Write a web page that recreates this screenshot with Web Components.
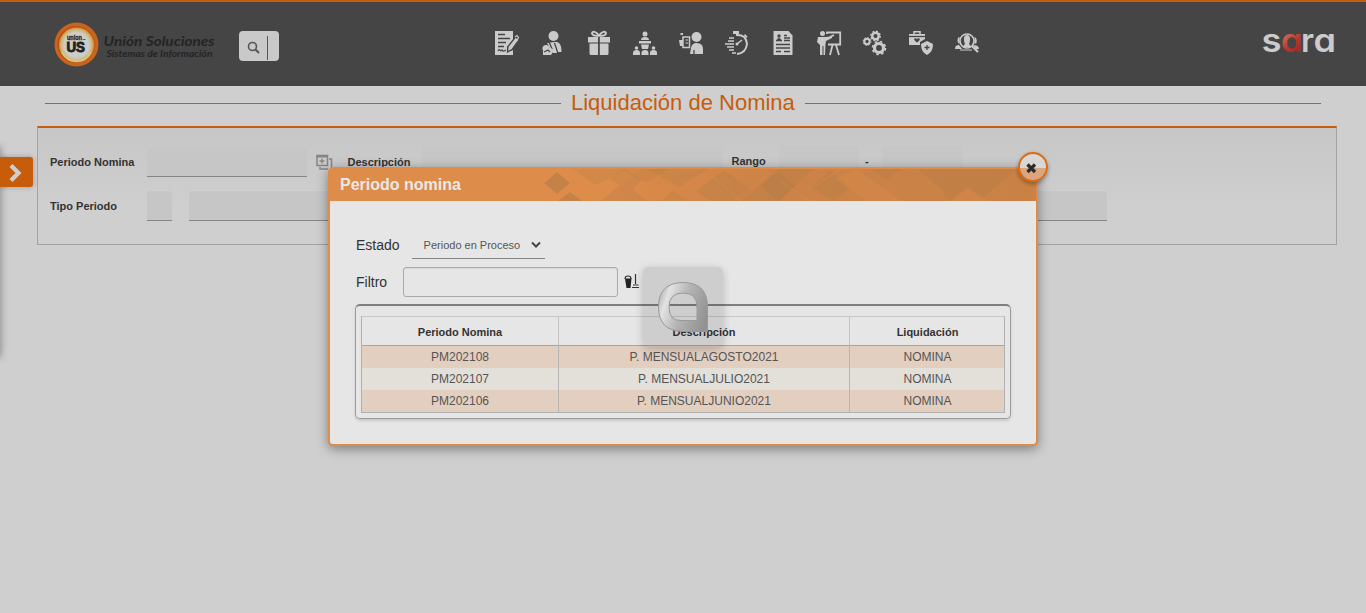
<!DOCTYPE html>
<html lang="es">
<head>
<meta charset="utf-8">
<title>Liquidación de Nomina</title>
<style>
html,body{margin:0;height:100%;overflow:hidden}
body{background:#cfcfcf;font-family:"Liberation Sans",Arial,sans-serif;color:#333}
</style>
</head>
<body>
<payroll-page></payroll-page>
<script>
const define = (name, html, setup) => customElements.define(name, class extends HTMLElement {
  connectedCallback() {
    if (this.shadowRoot) return;
    const root = this.attachShadow({mode: 'open'});
    const t = document.createElement('template');
    t.innerHTML = html;
    root.append(t.content.cloneNode(true));
    if (setup) setup(this, root);
  }
});

/* Module icons on a 24x24 grid; "k" marks details cut out in the bar colour. */
const ICONS = {
  edit: `<path d="M0 0h18v9l-6 7v4h4l2-1v5H0z"/><path class="k" d="M3 3.500h7M3 7.500h12M3 11.500h8M3 15.500h6M3 20c2-4 2 2 4-1 1 2 2 1 4 0"/><path class="k" stroke-width="1" d="m12.500 21 .5-5.500L20.500 6 24 8.500l-7 10z" style="fill:#cbcbcb"/><path class="w" stroke-width="1.200" d="m20 6 2-1.500 1.500 2-2 4"/>`,
  worker: `<circle cx="12.500" cy="5" r="5"/><path d="M8 12q4-1.500 8-1 4.500 1.500 4.500 8.500v1.500H15z"/><path d="M6 12h7l3 10h-4z"/><path class="k" d="m8.500 12 3 7m2-7 3 9"/><circle cx="5" cy="17.500" r="3.500"/><path d="m2 20 6-4 5 3-3 5H2z"/><path class="k" stroke-width="1" d="m3 21 4-2 2 2"/>`,
  gift: `<path d="M1 6h10v5.500H1zm11.800 0H23v5.500H12.800zM2.500 12.500H11V24H4q-1.500 0-1.500-1.500zm10.300 0h8.700v10q0 1.500-1.500 1.500h-7.200z"/><path class="w" stroke-width="1.900" d="M12 4.500C9 0 5 0 5 2.500q1 3 7 2 6 1 7-2C19 0 15 0 12 4.500"/>`,
  team: `<circle cx="12" cy="3" r="2.500"/><path d="M8 9q0-3 4-3t4 3zM6 10h12v2.500H6zm2 3.500h8L15 18H9zM0 22q0-3 3.500-3T7 22v2H0zm8.500 0q0-3 3.500-3t3.500 3v2h-7zm8.500 0q0-3 3.500-3t3.500 3v2h-7z"/><circle cx="3.500" cy="17" r="1.800"/><circle cx="20.500" cy="17" r="1.800"/>`,
  present: `<circle cx="17.500" cy="6" r="5"/><path d="M11 23l1-6q1-5 5.500-5 6.500 0 6.500 6v5z"/><path class="w" stroke-width="1.500" d="M4 6h6.500v10.500H4z"/><path d="M0 9h4v6H1zM1.500 2H4v2H1.500z"/><path class="w" stroke-width="1.200" d="M6.500 9H9M6.500 12H9"/><path class="k" d="M15 19v4"/>`,
  timer: `<path class="w" stroke-width="2" d="M11 4q10-1 11 9-1 9-10 10"/><path class="w" stroke-width="1.500" d="M4 7h5M3 10h6M0 13h9M2 16h7M4 19h5M7 22h4M12 13l5-4"/><path d="M8 0h6v3H8zM20 3l2.500 2.500-1 1.500L19 4.500z"/><circle cx="12" cy="13" r="1.500"/>`,
  resume: `<path d="M2.500 0h15l4 4.500V24h-19z"/><path class="k" d="M5 9.500h6M13 4.500h3M13 7h6M13 9.500h6M5 13.500h14M5 17h14M5 20.500h5M13 20.500h6"/><path d="M6 9q0-2 2-2t2 2z" fill="#454545"/><circle cx="8" cy="5" r="1.700" fill="#454545"/>`,
  teach: `<circle cx="5.500" cy="2.500" r="2.500"/><path d="M1 6h8l6-1v2l-6 3-.5 3-.5 11H6.500V15h-1v9H3V14L0 11z"/><path class="w" stroke-width="1.800" d="M10 3V1.500h13.200v12H11M15.500 14 13 24m6-10 3 10M13 6l4-2"/>`,
  gears: `<circle class="w" cx="12.500" cy="5" r="3.300" stroke-width="2.400"/><circle class="w" cx="12.500" cy="5" r="4.800" stroke-width="1.300" stroke-dasharray="1.900 1.870"/><circle class="w" cx="4" cy="10.500" r="2.700" stroke-width="2"/><circle class="w" cx="4" cy="10.500" r="3.900" stroke-width="1" stroke-dasharray="1.530 1.530"/><circle class="w" cx="16" cy="17" r="4.500" stroke-width="3.200"/><circle class="w" cx="16" cy="17" r="6.500" stroke-width="1.600" stroke-dasharray="2.550 2.550"/>`,
  insurance: `<path d="M0 3h16v5l-5 3v3H0z"/><path class="w" stroke-width="1.500" d="M5 3V.8h6V3"/><path class="k" d="M0 5.500h16"/><path d="M5 8q1.500-1.500 3 0 1.500-1.500 3 0-1 3-3 3.500Q6 11 5 8" fill="#454545"/><path d="m18 10 6 3q0 8-6 11-6-3-6-11z"/><path class="k" stroke-width="2" d="M18 14v5m-2.500-2.500h5"/>`,
  search: `<circle class="w" cx="12" cy="10" r="7" stroke-width="1.600"/><path d="M9 8q0-4 3-4t3 4-1 5q1.500 1 2 3H8q.5-2 2-3-1-1-1-5zM0 18q0-4 4-4l3 4zM2.500 10q0-4 2-4v7q-2-1-2-3zm17-4q3 1 2 6l-2 1zM18 14q6 0 6 4h-3z"/><path class="w" stroke-width="1" d="M5 19h12"/><path class="w" stroke-width="2.200" d="m17 15 6 6"/>`
};

define('module-icon', `<style>
:host{display:block;width:24px;height:24px}svg{display:block;overflow:visible;fill:#cbcbcb}
.k{fill:none;stroke:#454545;stroke-width:1.300}.w{fill:none;stroke:#cbcbcb}
</style><svg width="24" height="24" viewBox="0 0 24 24"></svg>`,
(h, r) => r.querySelector('svg').innerHTML = ICONS[h.getAttribute('name')]);

define('company-logo', `<style>:host{display:block;width:164px;height:46px}svg{display:block}</style>
<svg width="164" height="46" viewBox="0 0 164 46">
<defs><radialGradient id="g"><stop offset=".7" stop-color="#cdccca"/><stop offset=".85" stop-color="#d0bc82"/><stop offset="1" stop-color="#cf9440"/></radialGradient></defs>
<circle cx="22.500" cy="22.500" r="22" fill="#c9641d"/><circle cx="22" cy="22.500" r="18.500" fill="#c04b18"/><circle cx="22.500" cy="23" r="17.500" fill="url(#g)"/><path d="M8 30a16 16 0 0 0 29 0" fill="none" stroke="#d8cc8d" stroke-width="1.500"/>
<g font-family="Liberation Sans,Arial,sans-serif" font-weight="700" fill="#222"><text x="13" y="18" font-size="7" textLength="15" lengthAdjust="spacingAndGlyphs" stroke="#222" stroke-width=".3">union</text><path d="M28.500 17.500h3" stroke="#b33"/><text x="12.500" y="29.500" font-size="14" textLength="18.500" lengthAdjust="spacingAndGlyphs" stroke="#222" stroke-width=".9">US</text></g>
<g font-family="Lato,sans-serif" font-style="italic" font-weight="700" fill="#242424"><text x="49.500" y="23.500" font-size="14" textLength="111" lengthAdjust="spacingAndGlyphs">Unión Soluciones</text><text x="52.500" y="35" font-size="9.500" textLength="106" lengthAdjust="spacingAndGlyphs">Sistemas de Información</text></g></svg>`);

define('sara-logo', `<style>:host{display:block;width:74px;height:30px}svg{display:block;overflow:visible}text{font-family:Inter,sans-serif;font-weight:600;font-size:32px;font-feature-settings:"cv11";fill:#cbcbcb}</style>
<svg width="74" height="30" viewBox="0 0 74 30"><defs><linearGradient id="r" gradientUnits="userSpaceOnUse" x1="22" y1="4" x2="40" y2="24"><stop stop-color="#d9705a"/><stop offset=".5" stop-color="#b9372a"/><stop offset="1" stop-color="#a3201d"/></linearGradient></defs>
<text y="22.500"><tspan x="-.5" textLength="20" lengthAdjust="spacingAndGlyphs">s</tspan><tspan x="19" textLength="21.500" lengthAdjust="spacingAndGlyphs" fill="url(#r)">a</tspan><tspan x="39" textLength="13" lengthAdjust="spacingAndGlyphs">r</tspan><tspan x="51.500" textLength="22.500" lengthAdjust="spacingAndGlyphs">a</tspan></text></svg>`);

define('quick-search', `<style>:host{display:flex;box-sizing:border-box;width:40px;height:30px;background:#c9c9c9;border-radius:4px;padding:5px 11px 1px 8px;justify-content:space-between}
i{width:1px;background:#555}svg{margin-top:5px}</style>
<svg width="13" height="13" viewBox="0 0 13 13" fill="none" stroke="#555"><circle cx="5.500" cy="5.500" r="4" stroke-width="1.600"/><path d="m8.500 8.500 3.500 3.500" stroke-width="2"/></svg><i></i>`);

define('top-bar', `<style>
:host{display:grid;grid-template-columns:441px 1fr 74px;box-sizing:border-box;height:86px;border-top:2px solid #c75d0a;background:#454545;padding:0 30px 0 54px}
.l{display:flex;padding-top:20px}quick-search{margin:9px 0 0 21px}
nav{display:flex;gap:22px;padding-top:29px}sara-logo{margin:27px 0 0 0}
</style><div class="l"><company-logo></company-logo><quick-search></quick-search></div><nav></nav><sara-logo></sara-logo>`,
(h, r) => r.querySelector('nav').innerHTML = Object.keys(ICONS).map(k => `<module-icon name="${k}"></module-icon>`).join(''));

define('page-title', `<style>:host{display:flex;align-items:center;gap:10px;height:34px;padding:0 45px;color:#c75d0a;font-size:22px}
i{flex:1;height:1px;background:#c75d0a}h1{all:unset;width:224px;white-space:nowrap}</style><i></i><h1><slot></slot></h1><i></i>`);

define('form-label', `<style>:host{display:block;font-size:11px;font-weight:700;color:#333;white-space:nowrap;line-height:30px}</style><slot></slot>`);
define('form-field', `<style>:host{display:block;box-sizing:border-box;height:30px;background:#c6c6c6;border-bottom:1px solid #858585;border-radius:4px 4px 0 0}</style>`);

define('period-form', `<style>
:host{display:block;box-sizing:border-box;height:119px;margin:6px 29px 0 37px;border:1px solid #a3a3a3;border-top:2px solid #c75d0a;background:linear-gradient(#c6c6c6,#cfcfcf 70%);padding-top:19px}
.a,.b{display:grid;height:30px;padding-left:12px}
.a{grid-template-columns:97px 160px 8px 32px 75px 300px 9px 48px 80px 6px 17px 80px}.b{grid-template-columns:97px 25px 17px 918px;margin-top:14px}
svg{margin-top:7px}.up{margin-top:-1px}.in{padding-left:.5px}
</style>
<div class="a"><form-label>Periodo Nomina</form-label><form-field></form-field><span></span>
<svg width="18" height="18" viewBox="0 0 18 18" fill="none" stroke="#858585"><path d="M2 1.500h10.500v10H2z" stroke-width="1.500"/><path d="M1.500 2.500H13" stroke-width="2"/><path d="M7 4.500v5M4.500 7h5" stroke-width="1.500"/><path d="M14 5h2.500v9.500M5 13v2h8" stroke-width="1.500"/></svg>
<form-label class="in">Descripción</form-label><form-field></form-field><span></span><form-label class="up in">Rango</form-label><form-field class="up"></form-field><span></span><form-label class="up">-</form-label><form-field class="up"></form-field></div>
<div class="b"><form-label>Tipo Periodo</form-label><form-field></form-field><span></span><form-field></form-field></div>`);

define('side-tab', `<style>:host{display:block;position:absolute;left:0;top:157px;width:33px;height:30px}
.t{position:relative;height:30px;background:#c75d0a;border-radius:0 3px 3px 0;box-shadow:0 0 5px #0004}
.s{position:absolute;left:-20px;top:-10px;width:20px;height:210px;box-shadow:0 0 9px #0006}svg{display:block}</style>
<div class="s"></div><div class="t"><svg width="33" height="30" viewBox="0 0 33 30"><path d="m11 8.500 7.500 7.500-7.500 7.500" fill="none" stroke="#cfcfcf" stroke-width="4.200"/></svg></div>`);

define('close-button', `<style>:host{display:block;box-sizing:border-box;width:30px;height:30px;border:2px solid #d96b14;border-radius:50%;background:linear-gradient(#d7d7d7 0 14px,#daa67d 14px);box-shadow:0 2px 4px #0005}svg{display:block}</style>
<svg width="26" height="26" viewBox="0 0 26 26"><path d="m7.500 10.500 7.500 7.500m0-7.500-7.500 7.500" stroke="#2c2c2c" stroke-width="3.200"/></svg>`);

define('state-select', `<style>:host{display:flex;box-sizing:border-box;width:133px;height:27px;border-bottom:1px solid #858585;align-items:center;justify-content:space-between;padding:0 4px 0 12px;font-size:11px;color:#555}span{white-space:nowrap}</style>
<span><slot></slot></span><svg width="10" height="8" viewBox="0 0 10 8"><path d="m1 1.500 4 4 4-4" fill="none" stroke="#444" stroke-width="2"/></svg>`);

define('period-table', `<style>
:host{display:block;box-sizing:border-box;width:656px;height:115px;border:1px solid #9b9b9b;border-top:2px solid #7f807d;border-radius:5px;padding:10px 5px;box-shadow:0 2px 3px #0002}
.t{display:grid;grid-template-columns:197px 291px 154px;border:1px solid #b0b0b0;border-top-color:#c8c8c8;font-size:12px;line-height:22px;color:#555;text-align:center}
.t>*{border-right:1px solid #b5b5b5;box-sizing:border-box;height:22px}.t>:nth-child(3n){border-right:0;padding-left:1px}
.t>b{font-size:11px;height:29px;line-height:30px;border-bottom:1px solid #a5a5a5;border-right-color:#c4c4c4;color:#333}
.o{background:#e2cfc0}.e{background:#e3dfd9}
</style><div class="t"><b>Periodo Nomina</b><b>Descripción</b><b>Liquidación</b></div>`,
(h, r) => {
  const rows = [['PM202108', 'P. MENSUALAGOSTO2021'], ['PM202107', 'P. MENSUALJULIO2021'], ['PM202106', 'P. MENSUALJUNIO2021']];
  rows.forEach((d, i) => [...d, 'NOMINA'].forEach(x => {
    const c = document.createElement('div');
    c.className = i % 2 ? 'e' : 'o';
    c.textContent = x;
    r.querySelector('.t').append(c);
  }));
});

define('period-dialog', `<style>
:host{display:block;position:absolute;left:328px;top:167px;box-sizing:border-box;width:710px;height:279px;border:2px solid #de8c4a;border-radius:5px;background:#e6e6e6;box-shadow:0 3px 12px #0006}
header{position:relative;height:32px;background:#de8c4a;color:#e8e8e8;font-weight:700;font-size:16px}
header svg{display:block;position:absolute;right:0;top:0}header span{position:relative;display:block;padding:0 10px;line-height:31px}
close-button{position:absolute;right:-12px;top:-17px}
.r{display:flex;align-items:center;padding-left:26px;font-size:14px;color:#333;line-height:14px}
.r1{height:27px;margin-top:31px;gap:12px}.r1 span{padding-bottom:2px}.r2{height:30px;margin-top:8px}
.in{box-sizing:border-box;width:215px;height:30px;border:1px solid #aaa;border-radius:3px;margin:0 6px 0 16px;box-shadow:inset 0 1px 1px #0001}
.r2 svg{margin-top:-3px}
period-table{margin:7px 0 0 25px}
</style>
<header><svg width="500" height="32" viewBox="0 0 500 32"><defs><linearGradient id="f"><stop stop-color="#c98145" stop-opacity="0"/><stop offset=".4" stop-color="#cd8347"/><stop offset="1" stop-color="#c98145"/></linearGradient></defs>
<path d="M65 32 106 0H500v32z" fill="url(#f)"/><path d="m8 14 13-11 13 11-13 11zM22 32l12-9 12 9z" fill="#9d7446" fill-opacity=".38"/><g fill="#9d7446" fill-opacity=".17"><path d="M65 32l22-19 25 19zM73 10 88 0l18 11-11 11zM125 32l12-10 16 10zM112 0h60l-29 18zM160 22l28-21 28 20-14 11h-28zM225 17l17-14 17 14-17 15zM275 18l19-16 22 16-18 14zM335 0h30l-14 11zM382 0h73l-34 20-8 7zM406 24l45-24h31l-37 30-14-12-17 14z"/><path d="M36 0h55L60 16zM85 0h48l-23 14zM205 32l38-32h34l-34 32z"/></g>
<g fill="none" stroke="#df914d" stroke-opacity=".6" stroke-width=".7"><path d="m198 32 36-28M175 6l30 26M245 12l28 20M270 22l35-22"/></g><path d="M414 32l19-13 19 13M300 10l20-10 45 32H330z" fill="#de8c4a" fill-opacity=".35"/></svg><span>Periodo nomina</span></header>
<close-button></close-button>
<div class="r r1"><span>Estado</span><state-select>Periodo en Proceso</state-select></div>
<div class="r r2"><span>Filtro</span><div class="in"></div><svg width="15" height="16" viewBox="0 0 15 16"><path d="M1 5.500h6.500L6.500 15h-4z" fill="#222"/><path d="M1 6q0-3 3-3t3 3M11.500 1v10M9 12h5.500M8 14.500h7" fill="none" stroke="#333" stroke-width="1.200"/></svg></div>
<period-table></period-table>`);

define('busy-indicator', `<style>:host{display:block;position:absolute;left:643px;top:267px;width:80px;height:80px;border-radius:5px;background:#0000001a;box-shadow:0 2px 9px #0003}svg{display:block}</style>
<svg width="80" height="80" viewBox="0 0 80 80"><defs><linearGradient id="m" x1="0" y1=".3" x2="1" y2=".65"><stop stop-color="#b9b9b9"/><stop offset=".16" stop-color="#e2e2e2"/><stop offset=".5" stop-color="#b5b5b5"/><stop offset="1" stop-color="#929292"/></linearGradient></defs>
<path fill-rule="evenodd" d="M40 15.500Q64.500 15.500 64.500 40V64.500H40Q15.500 64 15.500 40T40 15.500zM40 26Q26 26 26 40T38 53.500H54V40Q54 26 40 26z" fill="url(#m)" stroke="#999"/></svg>`);

define('payroll-page', `<style>:host{display:block;position:relative;height:613px;overflow:hidden}</style>
<top-bar></top-bar><page-title>Liquidación de Nomina</page-title><period-form></period-form>
<side-tab></side-tab><period-dialog></period-dialog><busy-indicator></busy-indicator>`);
</script>
</body>
</html>
